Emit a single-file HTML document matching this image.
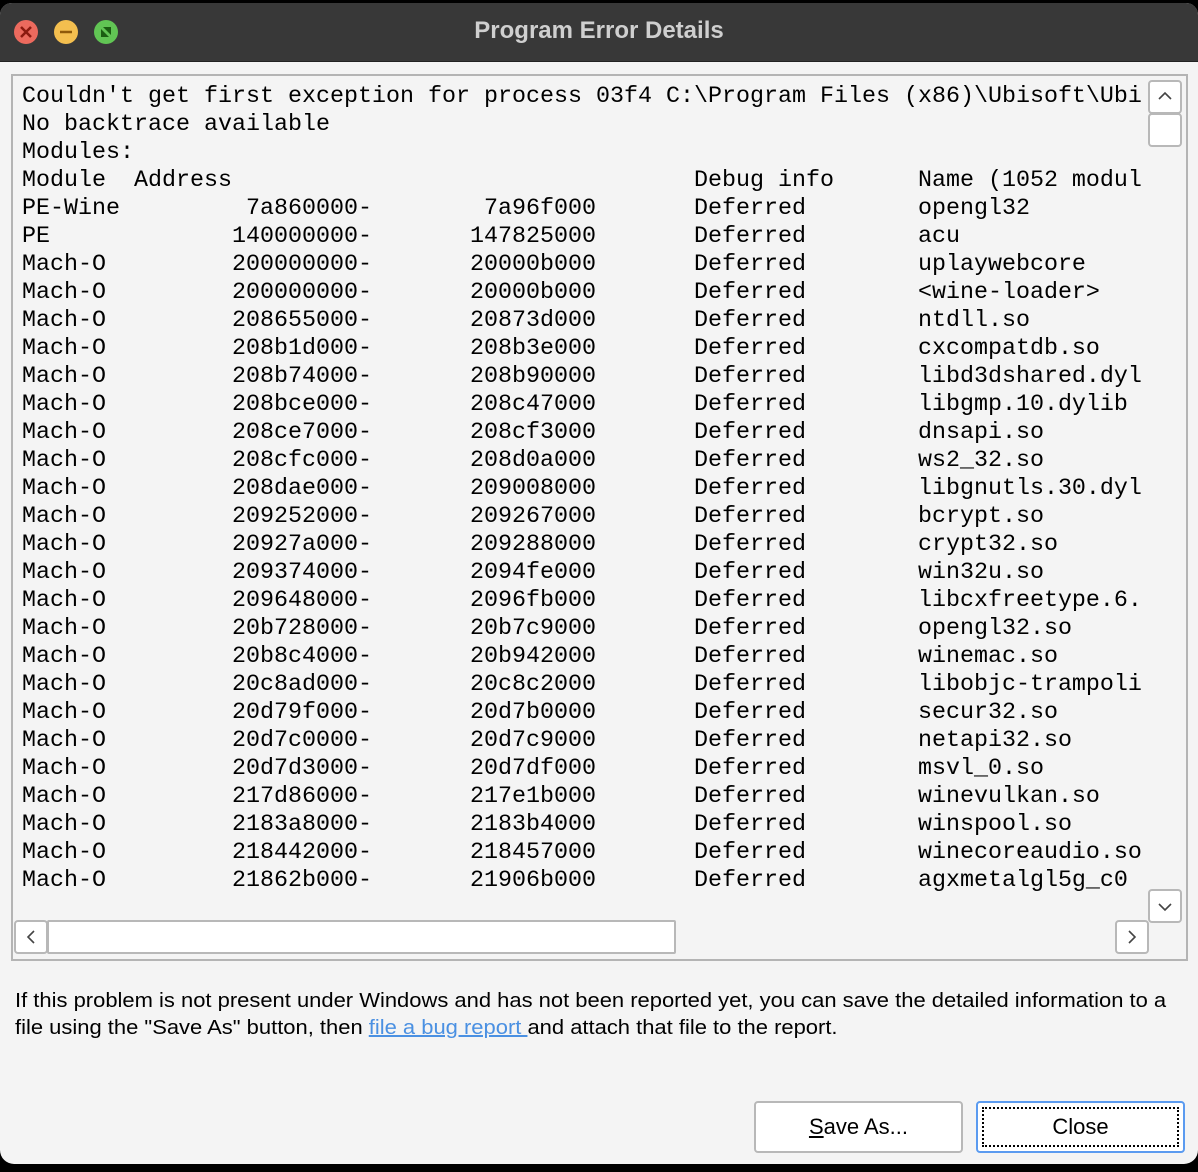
<!DOCTYPE html>
<html><head><meta charset="utf-8"><style>
html,body{margin:0;padding:0;background:#000;width:1198px;height:1172px;overflow:hidden}
.win{position:absolute;left:0;top:3px;width:1198px;height:1161px;background:#f4f4f4;border-radius:12px 12px 14px 14px;overflow:hidden}
.tb{position:absolute;left:0;top:0;width:1198px;height:58px;background:#383838;border-bottom:1px solid #222}
.tl{position:absolute;top:17px;width:24px;height:24px;border-radius:50%}
.title{position:absolute;left:0;right:0;top:14px;text-align:center;color:#cfcfcf;font:bold 24px "Liberation Sans",sans-serif}
.box{position:absolute;left:11px;top:71px;width:1173px;height:883px;border:2px solid #b4b4b4;background:#f4f4f4;overflow:hidden}
pre{position:absolute;left:9px;top:7px;margin:0;font:23.33px/28px "Liberation Mono",monospace;color:#000;white-space:pre}
.btn{position:absolute;background:#fff;border:2px solid #b8b8b8;border-radius:4px;box-sizing:border-box}
.msg{position:absolute;left:15px;top:985px;font:20px/27px "Liberation Sans",sans-serif;color:#000;white-space:nowrap;transform:scaleX(1.098);transform-origin:0 0}
.msg a{color:#4a90e2;text-decoration:underline}
.pb{position:absolute;top:1098px;width:209px;height:52px;border:2px solid #b8b8b8;border-radius:4px;background:#fff;box-sizing:border-box;font:22px "Liberation Sans",sans-serif;text-align:center;line-height:48px}
</style></head><body>
<div class="win">
<div class="tb">
<div class="tl" style="left:14px;background:#ec6a5e"><svg width="24" height="24"><path d="M7 7L17 17M17 7L7 17" stroke="#8c1a10" stroke-width="2.5"/></svg></div>
<div class="tl" style="left:54px;background:#f4bf4f"><svg width="24" height="24"><path d="M6 12H18" stroke="#8f5a0a" stroke-width="2.5"/></svg></div>
<div class="tl" style="left:94px;background:#61c554"><svg width="24" height="24"><path d="M7 17V9L15 17ZM17 7V15L9 7Z" fill="#1b5e12"/></svg></div>
<div class="title">Program Error Details</div>
</div>
<div class="box">
<pre>Couldn't get first exception for process 03f4 C:\Program Files (x86)\Ubisoft\Ubi
No backtrace available
Modules:
Module  Address                                 Debug info      Name (1052 modul
PE-Wine         7a860000-        7a96f000       Deferred        opengl32
PE             140000000-       147825000       Deferred        acu
Mach-O         200000000-       20000b000       Deferred        uplaywebcore
Mach-O         200000000-       20000b000       Deferred        &lt;wine-loader&gt;
Mach-O         208655000-       20873d000       Deferred        ntdll.so
Mach-O         208b1d000-       208b3e000       Deferred        cxcompatdb.so
Mach-O         208b74000-       208b90000       Deferred        libd3dshared.dyl
Mach-O         208bce000-       208c47000       Deferred        libgmp.10.dylib
Mach-O         208ce7000-       208cf3000       Deferred        dnsapi.so
Mach-O         208cfc000-       208d0a000       Deferred        ws2_32.so
Mach-O         208dae000-       209008000       Deferred        libgnutls.30.dyl
Mach-O         209252000-       209267000       Deferred        bcrypt.so
Mach-O         20927a000-       209288000       Deferred        crypt32.so
Mach-O         209374000-       2094fe000       Deferred        win32u.so
Mach-O         209648000-       2096fb000       Deferred        libcxfreetype.6.
Mach-O         20b728000-       20b7c9000       Deferred        opengl32.so
Mach-O         20b8c4000-       20b942000       Deferred        winemac.so
Mach-O         20c8ad000-       20c8c2000       Deferred        libobjc-trampoli
Mach-O         20d79f000-       20d7b0000       Deferred        secur32.so
Mach-O         20d7c0000-       20d7c9000       Deferred        netapi32.so
Mach-O         20d7d3000-       20d7df000       Deferred        msvl_0.so
Mach-O         217d86000-       217e1b000       Deferred        winevulkan.so
Mach-O         2183a8000-       2183b4000       Deferred        winspool.so
Mach-O         218442000-       218457000       Deferred        winecoreaudio.so
Mach-O         21862b000-       21906b000       Deferred        agxmetalgl5g_c0</pre>
</div>
<div class="btn" style="left:1148px;top:77px;width:34px;height:34px"><svg width="30" height="30"><path d="M9 17L15 11L21 17" stroke="#444" stroke-width="1.6" fill="none"/></svg></div>
<div class="btn" style="left:1148px;top:110px;width:34px;height:34px"></div>
<div class="btn" style="left:1148px;top:886px;width:34px;height:34px"><svg width="30" height="30"><path d="M9 13L15 19L21 13" stroke="#444" stroke-width="1.6" fill="none"/></svg></div>
<div class="btn" style="left:14px;top:917px;width:34px;height:34px"><svg width="30" height="30"><path d="M18 9L12 15L18 21" stroke="#444" stroke-width="1.6" fill="none"/></svg></div>
<div class="btn" style="left:47px;top:917px;width:629px;height:34px;border-radius:2px"></div>
<div class="btn" style="left:1115px;top:917px;width:34px;height:34px"><svg width="30" height="30"><path d="M12 9L18 15L12 21" stroke="#444" stroke-width="1.6" fill="none"/></svg></div>
<div class="msg">If this problem is not present under Windows and has not been reported yet, you can save the detailed information to a<br>file using the "Save As" button, then <a>file a bug report </a> and attach that file to the report.</div>
<div class="pb" style="left:754px"><u>S</u>ave As...</div>
<div class="pb" style="left:976px;border-color:#5b9bf0"><div style="position:absolute;left:4px;top:4px;right:4px;bottom:4px;border:2px dotted #000;line-height:36px">Close</div></div>
</div>
</body></html>
